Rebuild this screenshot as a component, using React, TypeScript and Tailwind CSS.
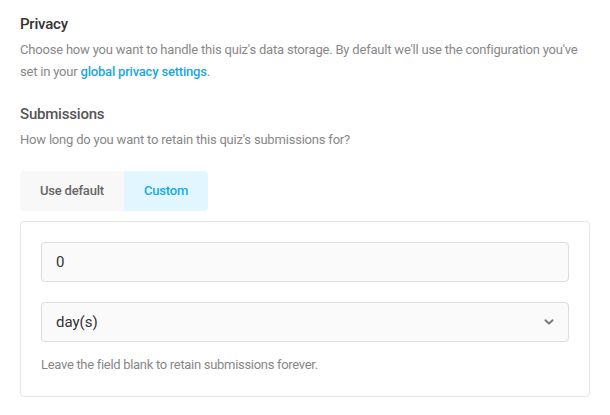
import React from "react";

export default function App() {
  return (
    <div className="w-[610px] h-[415px] bg-white px-5 pt-[13px]" style={{ fontFamily: "Roboto, 'Liberation Sans', sans-serif" }}>
      <h2 className="text-[15px] leading-[22px] font-medium tracking-[-0.2px] text-[#333]">Privacy</h2>
      <p className="mt-1 text-[13px] leading-[22px] tracking-[-0.2px] text-[#888]">
        Choose how you want to handle this quiz's data storage. By default we'll use the configuration you've
        <br />
        set in your <a className="font-medium text-[#17a8e3]">global privacy settings</a>.
      </p>

      <h3 className="mt-[20px] text-[15px] leading-[22px] font-medium tracking-[-0.2px] text-[#555]">Submissions</h3>
      <p className="mt-1 text-[13px] leading-[22px] tracking-[-0.2px] text-[#888]">How long do you want to retain this quiz's submissions for?</p>

      <div className="mt-[20px] flex">
        <div className="flex h-10 items-center rounded-l bg-[#f8f8f8] px-5 text-[13px] font-medium tracking-[-0.2px] text-[#666]">Use default</div>
        <div className="flex h-10 items-center rounded-r bg-[#e1f6ff] px-5 text-[13px] font-medium tracking-[-0.2px] text-[#17a8e3]">Custom</div>
      </div>

      <div className="mt-[10px] w-[570px] rounded border border-[#e6e6e6] p-5">
        <div className="flex h-10 items-center rounded border border-[#ddd] bg-[#fafafa] px-[14px] text-[15px] text-[#333]">0</div>
        <div className="mt-5 flex h-10 items-center justify-between rounded border border-[#ddd] bg-[#fafafa] pl-[14px] pr-[14px] text-[15px] text-[#333]">
          <span>day(s)</span>
          <svg width="10" height="6" viewBox="0 0 10 6">
            <path d="M1.5 1.2 L5 4.6 L8.5 1.2" fill="none" stroke="#777" strokeWidth="2" strokeLinecap="round" strokeLinejoin="round" />
          </svg>
        </div>
        <p className="mt-3 text-[13px] leading-[22px] tracking-[-0.3px] text-[#888]">Leave the field blank to retain submissions forever.</p>
      </div>
    </div>
  );
}
